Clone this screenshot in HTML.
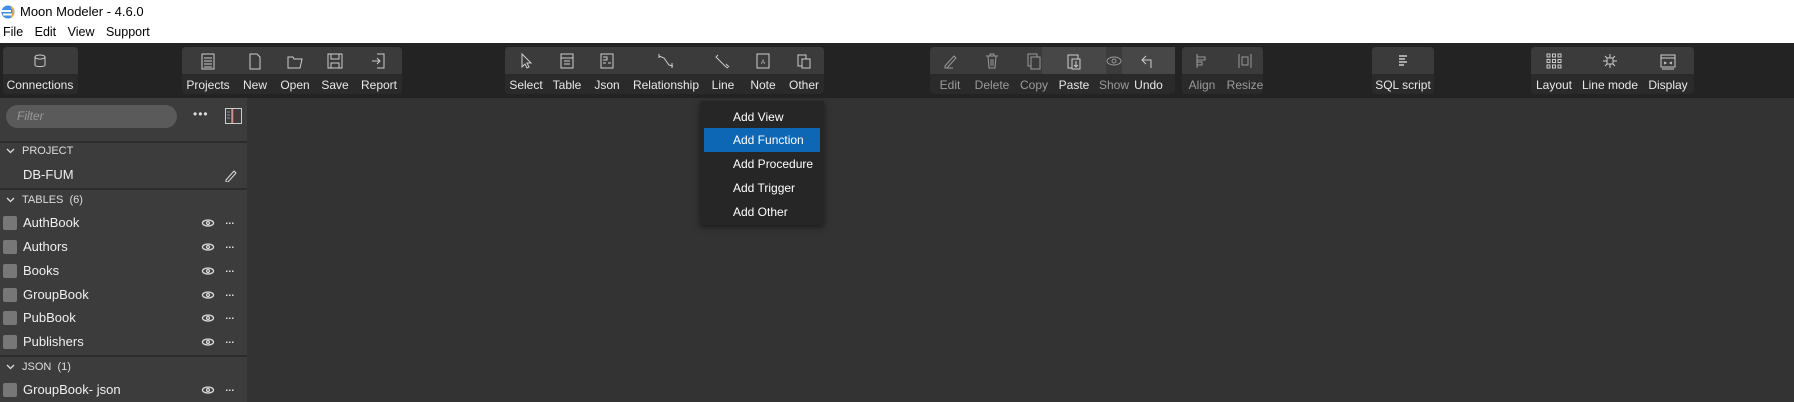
<!DOCTYPE html>
<html><head><meta charset="utf-8"><style>
*{margin:0;padding:0;box-sizing:border-box}
body{width:1794px;height:402px;overflow:hidden;background:#333;font-family:"Liberation Sans",sans-serif;position:relative}
.a{position:absolute}
#top{left:0;top:0;width:1794px;height:43px;background:#fff}
#tb{left:0;top:43px;width:1794px;height:55px;background:#232323}
.g{position:absolute;top:47px;height:47px;border-radius:4px;background:#2a2a2a;overflow:hidden}
.g:before{content:"";position:absolute;left:0;top:0;right:0;height:27px;background:#3b3b3b}
.it{position:absolute;top:47px;width:64px;height:47px;text-align:center;color:#e8e8e8;font-size:12px}
.it svg{position:absolute;left:22px;top:4px}
.it span{position:absolute;left:-10px;right:-10px;top:31px;white-space:nowrap}
.dim{color:#9a9a9a}
.hl{background:linear-gradient(#474747 0,#474747 27px,transparent 27px)}
#side{left:0;top:98px;width:247px;height:304px;background:#3c3c3c}
.row{position:absolute;left:0;width:247px;height:24px;color:#f0f0f0;font-size:13px;line-height:24px}
.cb{position:absolute;left:3px;top:5px;width:14px;height:14px;background:#777;border-radius:2px}
.sep{position:absolute;left:0;width:247px;height:2px;background:#2c2c2c}
.hdr{font-size:11px;color:#ddd}
.chev{position:absolute;left:6px;top:9px}
#menu{left:700px;top:101px;width:124px;height:124px;background:#262626;box-shadow:0 2px 6px rgba(0,0,0,.5)}
.mi{position:absolute;left:4px;width:116px;height:24px;line-height:24px;padding-left:29px;color:#fff;font-size:12px}
</style></head><body>
<div id="top" class="a">
 <svg class="a" style="left:1px;top:5px" width="14" height="14"><circle cx="7" cy="7" r="6.5" fill="#3a8ef0"/><rect x="0" y="5" width="10" height="2" fill="#fff"/><rect x="2" y="8.5" width="10" height="2" fill="#fff"/><path d="M10 2a6.5 6.5 0 0 1 0 10" stroke="#f4a23a" stroke-width="2" fill="none"/></svg>
 <div class="a" style="left:20px;top:4px;font-size:13px;color:#000">Moon Modeler - 4.6.0</div>
 <div class="a" style="left:3px;top:25px;font-size:12.5px;color:#000;word-spacing:8px">File Edit View Support</div>
</div>
<div id="tb" class="a"></div>
<div class="g" style="left:3px;width:75px"></div>
<div class="g" style="left:182px;width:220px"></div>
<div class="g" style="left:505px;width:319px"></div>
<div class="g" style="left:930px;width:245px"></div>
<div class="g" style="left:1182px;width:81px"></div>
<div class="g" style="left:1372px;width:62px"></div>
<div class="g" style="left:1531px;width:163px"></div>

<div class="it" style="left:8px"><svg width="20" height="20"><ellipse cx="10" cy="6" rx="5" ry="2" stroke="#ccc" fill="none"/><path d="M5 6v8c0 2 10 2 10 0V6" stroke="#ccc" fill="none"/></svg><span>Connections</span></div>
<div class="it" style="left:176px"><svg width="20" height="20"><rect x="4" y="3" width="12" height="15" stroke="#ccc" fill="none"/><path d="M6 7h8M6 10h8M6 13h8M6 16h8" stroke="#ccc"/></svg><span>Projects</span></div>
<div class="it" style="left:223px"><svg width="20" height="20"><path d="M5 3h7l3 3v12H5z" stroke="#ccc" fill="none"/></svg><span>New</span></div>
<div class="it" style="left:263px"><svg width="20" height="20"><path d="M3 6h5l1 2h8l-2 9H3z" stroke="#ccc" fill="none"/></svg><span>Open</span></div>
<div class="it" style="left:303px"><svg width="20" height="20"><rect x="3" y="3" width="14" height="14" stroke="#ccc" fill="none"/><path d="M6 3v5h8V3M6 17v-5h8v5" stroke="#ccc" fill="none"/></svg><span>Save</span></div>
<div class="it" style="left:347px"><svg width="20" height="20"><path d="M8 3h7v14H8M3 10h8M8 7l3 3-3 3" stroke="#ccc" fill="none"/></svg><span>Report</span></div>
<div class="it" style="left:494px"><svg width="20" height="20"><path d="M6 3v13l3-3 2 4 2-1-2-4h4z" stroke="#ccc" fill="none"/></svg><span>Select</span></div>
<div class="it" style="left:535px"><svg width="20" height="20"><rect x="4" y="3" width="12" height="14" stroke="#ccc" fill="none"/><path d="M4 7h12M7 10h6M7 13h6" stroke="#ccc"/></svg><span>Table</span></div>
<div class="it" style="left:575px"><svg width="20" height="20"><rect x="4" y="3" width="12" height="14" stroke="#ccc" fill="none"/><path d="M6 6h4v3H6M6 12h3M11 12h3" stroke="#ccc" fill="none"/></svg><span>Json</span></div>
<div class="it" style="left:634px"><svg width="20" height="20"><path d="M3 3v4M3 5l5 2 5 7 4 1M16 12v5" stroke="#ccc" fill="none"/></svg><span>Relationship</span></div>
<div class="it" style="left:691px"><svg width="20" height="20"><path d="M5 4l-2 2 4 4 6 6 2 1M13 13l3 3" stroke="#ccc" fill="none"/></svg><span>Line</span></div>
<div class="it" style="left:731px"><svg width="20" height="20"><rect x="4" y="3" width="12" height="14" stroke="#ccc" fill="none"/><text x="10" y="13" font-size="6" fill="#ccc" text-anchor="middle">A</text></svg><span>Note</span></div>
<div class="it" style="left:772px"><svg width="20" height="20"><rect x="4" y="4" width="8" height="11" stroke="#ccc" fill="none"/><rect x="8" y="8" width="8" height="9" stroke="#ccc" fill="#3b3b3b"/></svg><span>Other</span></div>
<div class="it dim" style="left:918px"><svg width="20" height="20"><path d="M5 15l9-10 2 2-9 10H5zM5 17h8" stroke="#999" fill="none"/></svg><span>Edit</span></div>
<div class="it dim" style="left:960px"><svg width="20" height="20"><path d="M4 5h12M8 5V3h4v2M6 5l1 12h6l1-12M9 8v7M11 8v7" stroke="#999" fill="none"/></svg><span>Delete</span></div>
<div class="it dim" style="left:1002px"><svg width="20" height="20"><rect x="4" y="3" width="9" height="12" stroke="#999" fill="none"/><rect x="7" y="6" width="9" height="12" stroke="#999" fill="#3b3b3b"/></svg><span>Copy</span></div>
<div class="it hl" style="left:1042px;width:64px"><svg width="20" height="20"><rect x="4" y="4" width="10" height="13" stroke="#ccc" fill="none"/><rect x="8" y="8" width="8" height="10" stroke="#ccc" fill="#474747"/><path d="M12 10v6M10 14l2 2 2-2" stroke="#ccc" fill="none"/></svg><span>Paste</span></div>
<div class="it dim" style="left:1082px"><svg width="20" height="20"><ellipse cx="10" cy="10" rx="7" ry="4" stroke="#999" fill="none"/><circle cx="10" cy="10" r="2" stroke="#999" fill="none"/></svg><span>Show</span></div>
<div class="it hl" style="left:1122px;width:53px"><svg width="20" height="20" style="left:16px"><path d="M8 5L4 9l4 4M4 9h9v8" stroke="#ccc" fill="none"/></svg><span>Undo</span></div>
<div class="it dim" style="left:1170px"><svg width="20" height="20"><path d="M5 3v14M5 6h8v3H5M5 11h5v3H5" stroke="#999" fill="none"/></svg><span>Align</span></div>
<div class="it dim" style="left:1213px"><svg width="20" height="20"><path d="M4 3v14M16 3v14M7 6h6v8H7z" stroke="#999" fill="none"/></svg><span>Resize</span></div>
<div class="it" style="left:1371px"><svg width="20" height="20"><path d="M6 5h8M6 8h6M6 11h8M6 14h5" stroke="#ccc" stroke-width="1.5"/></svg><span>SQL script</span></div>
<div class="it" style="left:1522px"><svg width="20" height="20"><g stroke="#ccc" fill="none"><rect x="3" y="3" width="3" height="3"/><rect x="8.5" y="3" width="3" height="3"/><rect x="14" y="3" width="3" height="3"/><rect x="3" y="8.5" width="3" height="3"/><rect x="8.5" y="8.5" width="3" height="3"/><rect x="14" y="8.5" width="3" height="3"/><rect x="3" y="14" width="3" height="3"/><rect x="8.5" y="14" width="3" height="3"/><rect x="14" y="14" width="3" height="3"/></g></svg><span>Layout</span></div>
<div class="it" style="left:1578px"><svg width="20" height="20"><path d="M3 10h14M10 3v14M5 5l10 10M15 5L5 15" stroke="#ccc" fill="none"/><rect x="7" y="7" width="6" height="6" fill="#3b3b3b" stroke="#ccc"/></svg><span>Line mode</span></div>
<div class="it" style="left:1636px"><svg width="20" height="20"><rect x="3" y="4" width="14" height="12" stroke="#ccc" fill="none"/><path d="M3 7h14M6 11l2 1-2 1M14 11l-2 1 2 1M4 18h12" stroke="#ccc" fill="none"/></svg><span>Display</span></div>

<div id="side" class="a">
 <div class="a" style="left:6px;top:7px;width:171px;height:23px;border-radius:12px;background:#5a5a5a;color:#999;font-style:italic;font-size:12px;line-height:23px;padding-left:11px">Filter</div>
 <div class="a" style="left:193px;top:9px;color:#ddd;font-size:12px;letter-spacing:1px">•••</div>
 <svg class="a" style="left:225px;top:10px" width="17" height="16"><rect x="0.5" y="0.5" width="16" height="15" stroke="#ccc" fill="none"/><path d="M7 0v16" stroke="#ccc"/><path d="M2 4h3M2 7h3M2 10h3" stroke="#88a"/><path d="M8 1v14" stroke="#c55"/></svg>
 <div class="sep" style="top:43px"></div>
</div>
<div class="row hdr" style="top:139px"><svg class="chev" width="9" height="6"><path d="M1 1l3.5 3.5L8 1" stroke="#ddd" fill="none" stroke-width="1.3"/></svg><span class="a" style="left:22px">PROJECT</span></div>
<div class="row" style="top:163px"><span class="a" style="left:23px">DB-FUM</span><svg class="a" style="left:224px;top:5px" width="14" height="14"><path d="M2 12l8-9 2 2-8 9H2z" stroke="#ddd" fill="none"/></svg></div>
<div class="sep" style="top:188px"></div>
<div class="row hdr" style="top:188px"><svg class="chev" width="9" height="6"><path d="M1 1l3.5 3.5L8 1" stroke="#ddd" fill="none" stroke-width="1.3"/></svg><span class="a" style="left:22px">TABLES&nbsp;&nbsp;(6)</span></div>
<div class="row" style="top:211px"><div class="cb"></div><span class="a" style="left:23px">AuthBook</span></div>
<div class="row" style="top:235px"><div class="cb"></div><span class="a" style="left:23px">Authors</span></div>
<div class="row" style="top:259px"><div class="cb"></div><span class="a" style="left:23px">Books</span></div>
<div class="row" style="top:283px"><div class="cb"></div><span class="a" style="left:23px">GroupBook</span></div>
<div class="row" style="top:306px"><div class="cb"></div><span class="a" style="left:23px">PubBook</span></div>
<div class="row" style="top:330px"><div class="cb"></div><span class="a" style="left:23px">Publishers</span></div>
<div class="sep" style="top:355px"></div>
<div class="row hdr" style="top:355px"><svg class="chev" width="9" height="6"><path d="M1 1l3.5 3.5L8 1" stroke="#ddd" fill="none" stroke-width="1.3"/></svg><span class="a" style="left:22px">JSON&nbsp;&nbsp;(1)</span></div>
<div class="row" style="top:378px"><div class="cb"></div><span class="a" style="left:23px">GroupBook- json</span></div>
<svg class="a" style="left:200px;top:211px" width="40" height="190">
 <g stroke="#ddd" fill="none" stroke-width="1.3">
  <g id="e"><ellipse cx="8" cy="12" rx="5.5" ry="3"/><circle cx="8" cy="12" r="1.5"/></g>
  <use href="#e" y="24"/><use href="#e" y="48"/><use href="#e" y="72"/><use href="#e" y="95"/><use href="#e" y="119"/><use href="#e" y="167"/>
 </g>
 <g fill="#ddd"><g id="d"><rect x="26" y="11.5" width="1.5" height="1.5"/><rect x="29" y="11.5" width="1.5" height="1.5"/><rect x="32" y="11.5" width="1.5" height="1.5"/></g>
  <use href="#d" y="24"/><use href="#d" y="48"/><use href="#d" y="72"/><use href="#d" y="95"/><use href="#d" y="119"/><use href="#d" y="167"/></g>
</svg>

<div id="menu" class="a">
 <div class="mi" style="top:4px">Add View</div>
 <div class="mi" style="top:27px;background:#0d67b5">Add Function</div>
 <div class="mi" style="top:51px">Add Procedure</div>
 <div class="mi" style="top:75px">Add Trigger</div>
 <div class="mi" style="top:99px">Add Other</div>
</div>
</body></html>
